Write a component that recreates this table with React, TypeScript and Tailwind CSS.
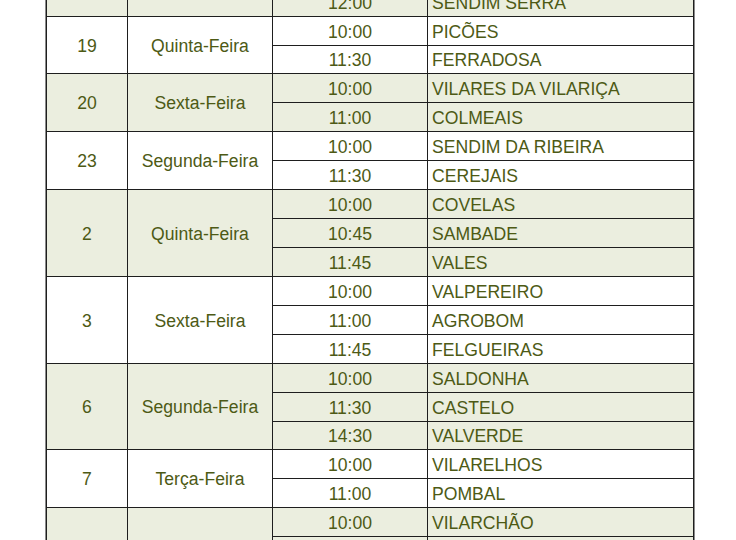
import React from "react";

type Group = { day: string; weekday: string; rows: [string, string][]; green: boolean };

const groups: Group[] = [
  { day: "", weekday: "", rows: [["12:00", "SENDIM SERRA"]], green: true },
  { day: "19", weekday: "Quinta-Feira", rows: [["10:00", "PICÕES"], ["11:30", "FERRADOSA"]], green: false },
  { day: "20", weekday: "Sexta-Feira", rows: [["10:00", "VILARES DA VILARIÇA"], ["11:00", "COLMEAIS"]], green: true },
  { day: "23", weekday: "Segunda-Feira", rows: [["10:00", "SENDIM DA RIBEIRA"], ["11:30", "CEREJAIS"]], green: false },
  { day: "2", weekday: "Quinta-Feira", rows: [["10:00", "COVELAS"], ["10:45", "SAMBADE"], ["11:45", "VALES"]], green: true },
  { day: "3", weekday: "Sexta-Feira", rows: [["10:00", "VALPEREIRO"], ["11:00", "AGROBOM"], ["11:45", "FELGUEIRAS"]], green: false },
  { day: "6", weekday: "Segunda-Feira", rows: [["10:00", "SALDONHA"], ["11:30", "CASTELO"], ["14:30", "VALVERDE"]], green: true },
  { day: "7", weekday: "Terça-Feira", rows: [["10:00", "VILARELHOS"], ["11:00", "POMBAL"]], green: false },
  { day: "", weekday: "", rows: [["10:00", "VILARCHÃO"], ["", ""]], green: true },
];

const shortRows = new Set([2, 15]);

export default function App() {
  let idx = 0;
  return (
    <div className="h-[540px] overflow-hidden bg-white">
      <div className="pl-[45px] -mt-[12px]">
        <div className="inline-block border-x border-[#8a8a8a]">
          <table
            className="table-fixed border-separate border-spacing-0 border-l border-[#1e1e1e] text-[17.6px] leading-none text-[#4d5a15]"
            style={{ fontFamily: '"Liberation Sans", Arial, sans-serif', width: 647 }}
          >
            <colgroup>
              <col className="w-[81px]" />
              <col className="w-[145px]" />
              <col className="w-[155px]" />
              <col className="w-[266px]" />
            </colgroup>
            <tbody>
              {groups.map((g, gi) =>
                g.rows.map((r, ri) => {
                  const bg = g.green ? "bg-[#ebeedf]" : "bg-white";
                  const h = shortRows.has(idx) ? "h-[28px]" : "h-[29px]";
                  idx++;
                  return (
                    <tr key={`${gi}-${ri}`} className={h}>
                      {ri === 0 && (
                        <>
                          <td
                            rowSpan={g.rows.length}
                            className={`${bg} border-r border-b border-[#1e1e1e] text-center align-middle p-0 pt-[3px]`}
                          >
                            {g.day}
                          </td>
                          <td
                            rowSpan={g.rows.length}
                            className={`${bg} border-r border-b border-[#1e1e1e] text-center align-middle p-0 pt-[3px]`}
                          >
                            {g.weekday}
                          </td>
                        </>
                      )}
                      <td className={`${bg} border-r border-b border-[#1e1e1e] text-center align-middle p-0 pt-[3px]`}>
                        {r[0]}
                      </td>
                      <td className={`${bg} border-r border-b border-[#1e1e1e] text-left align-middle p-0 pt-[3px] pl-[4px]`}>
                        {r[1]}
                      </td>
                    </tr>
                  );
                })
              )}
            </tbody>
          </table>
        </div>
      </div>
    </div>
  );
}
